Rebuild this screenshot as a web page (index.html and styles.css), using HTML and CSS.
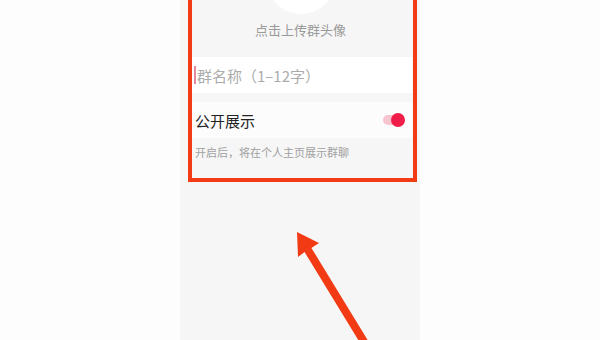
FILE: index.html
```html
<!DOCTYPE html>
<html lang="zh-CN">

<head>
    <meta charset="UTF-8">
    <meta name="viewport" content="width=device-width, initial-scale=1.0">
    <title>创建群聊</title>
    <link rel="stylesheet" href="styles.css">
</head>

<body>
    <div class="screen">
        <div class="avatar"></div>
        <div class="avatar-tip">点击上传群头像</div>

        <div class="row name-row">
            <span class="cursor"></span>
            <span class="placeholder">群名称（1–12字）</span>
        </div>

        <div class="row switch-row">
            <span class="row-label">公开展示</span>
            <span class="switch"><span class="knob"></span></span>
        </div>
        <p class="hint">开启后，将在个人主页展示群聊</p>
    </div>

    <!-- annotation -->
    <div class="mark-box"></div>
    <svg class="mark-arrow" width="600" height="340" viewBox="0 0 600 340">
        <polygon fill="#f23b14"
            points="297,232 319,243 311.4,247.9 369.4,342.9 362.6,347.1 304.6,252.1 298,257" />
    </svg>
</body>

</html>
```

FILE: styles.css
```css
body {
    margin: 0;
    height: 340px;
    position: relative;
    overflow: hidden;
    background-color: #fdfdfd;
    font-family: "Noto Sans CJK SC", "Noto Sans", sans-serif;
}

.screen {
    width: 240px;
    height: 340px;
    margin: 0 auto;
    padding: 0 8px 0 9px;
    box-sizing: border-box;
    background-color: #f6f6f6;
    overflow: hidden;
}

.avatar {
    width: 70px;
    height: 70px;
    margin: -56px auto 0;
    border-radius: 50%;
    background-color: #ffffff;
}

.avatar-tip {
    margin-top: 7px;
    font-size: 13px;
    line-height: 18px;
    color: #9a9a9a;
    text-align: center;
}

.row {
    display: flex;
    align-items: center;
    height: 36px;
    background-color: #ffffff;
}

.name-row {
    margin-top: 18px;
    padding-left: 5px;
}

.cursor {
    width: 2px;
    height: 18px;
    margin-right: 1px;
    background-color: #e58a9c;
}

.placeholder {
    font-size: 15px;
    color: #acacac;
}

.switch-row {
    margin-top: 9px;
    padding: 0 9px 0 6px;
    justify-content: space-between;
    background-color: #fcfcfc;
}

.row-label {
    font-size: 15px;
    color: #222222;
}

.switch {
    position: relative;
    width: 20px;
    height: 10px;
    border-radius: 5px;
    background-color: #f8c4d0;
}

.knob {
    position: absolute;
    right: -2px;
    top: -2px;
    width: 14px;
    height: 14px;
    border-radius: 50%;
    background-color: #f01d49;
}

.hint {
    margin: 6px 0 0;
    padding-left: 6px;
    font-size: 11px;
    line-height: 16px;
    color: #a0a0a0;
}

.mark-box {
    position: absolute;
    left: 188px;
    top: -6px;
    width: 221px;
    height: 180px;
    border: 4px solid #f23b14;
}

.mark-arrow {
    position: absolute;
    left: 0;
    top: 0;
}
```
